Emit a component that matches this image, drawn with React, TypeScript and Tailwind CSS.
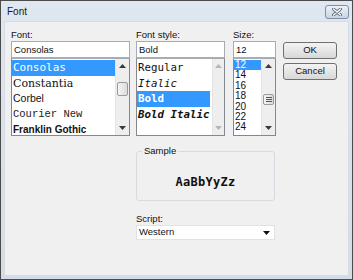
import React from 'react';

const ui = { fontFamily: '"Liberation Sans", Arial, sans-serif' };
const mono = { fontFamily: '"DejaVu Sans Mono", "Liberation Mono", monospace' };

const Up = () => (
  <svg width="7" height="4" viewBox="0 0 7 4">
    <path d="M0 4 L3.5 0 L7 4 Z" fill="#3a3a3a" />
  </svg>
);

const Down = () => (
  <svg width="7" height="4" viewBox="0 0 7 4">
    <path d="M0 0 L3.5 4 L7 0 Z" fill="#3a3a3a" />
  </svg>
);

const ScrollBar: React.FC<{ thumbTop?: number; thumbH?: number; grip?: boolean; disabled?: boolean }> = ({
  thumbTop,
  thumbH,
  grip,
  disabled,
}) => (
  <div className="w-[14px] h-full bg-[#eeeeee] border-l border-[#e4e4e4] flex flex-col items-center justify-between py-[5px] relative">
    <div className={disabled ? 'opacity-30' : ''}>
      <Up />
    </div>
    {thumbTop !== undefined && (
      <div
        className="absolute left-[1px] right-[1px] rounded-[2px] border border-[#9a9a9a] bg-gradient-to-r from-[#f4f4f4] to-[#dcdcdc] flex flex-col items-center justify-center gap-[1px]"
        style={{ top: thumbTop, height: thumbH }}
      >
        {grip && (
          <>
            <div className="w-[6px] h-px bg-[#555]" />
            <div className="w-[6px] h-px bg-[#555]" />
            <div className="w-[6px] h-px bg-[#555]" />
          </>
        )}
      </div>
    )}
    <div className={disabled ? 'opacity-30' : ''}>
      <Down />
    </div>
  </div>
);

const Label: React.FC<{ children: React.ReactNode }> = ({ children }) => (
  <div className="h-[13px] text-[9.5px] leading-[13px] text-[#111]" style={ui}>
    {children}
  </div>
);

const Input: React.FC<{ value: string }> = ({ value }) => (
  <div
    className="h-[17px] bg-white border border-[#a9acb3] px-[2px] text-[9.5px] leading-[15px] text-[#111]"
    style={ui}
  >
    {value}
  </div>
);

const Button: React.FC<{ children: React.ReactNode }> = ({ children }) => (
  <div
    className="h-[17px] rounded-[3px] border border-[#707070] bg-gradient-to-b from-[#f3f3f3] via-[#e6e6e6] to-[#d8d8d8] flex items-center justify-center text-[9.5px] text-[#111]"
    style={ui}
  >
    {children}
  </div>
);

export default function App() {
  const fonts = [
    { name: 'Consolas', cls: 'text-[11px] text-white', style: mono, sel: true },
    { name: 'Constantia', cls: 'text-[11px] text-[#111]', style: { fontFamily: '"DejaVu Serif", serif' } },
    { name: 'Corbel', cls: 'text-[10.5px] text-[#111]', style: ui },
    { name: 'Courier New', cls: 'text-[10.5px] text-[#222]', style: { fontFamily: '"Liberation Mono", monospace' } },
    { name: 'Franklin Gothic', cls: 'text-[10px] font-bold text-[#111]', style: ui },
  ];
  const styles = [
    { name: 'Regular', cls: '' },
    { name: 'Italic', cls: 'italic' },
    { name: 'Bold', cls: 'font-bold text-white', sel: true },
    { name: 'Bold Italic', cls: 'font-bold italic' },
  ];
  const sizes = ['12', '14', '16', '18', '20', '22', '24'];

  return (
    <div className="w-[353px] h-[280px] border border-[#4b4b4b] bg-gradient-to-b from-[#dfe7f0] to-[#d3dde8] flex flex-col overflow-hidden">
      <div className="h-[20px] flex items-center justify-between pl-[6px] pr-[3px]">
        <span className="text-[10px] text-[#1a1a1a]" style={ui}>
          Font
        </span>
        <div className="w-[24px] h-[14px] mt-[1px] rounded-[3px] border border-[#7d8ea5] bg-gradient-to-b from-[#eef2f7] to-[#c9d4e1] flex items-center justify-center">
          <svg width="10" height="8" viewBox="0 0 10 8">
            <path d="M1.5 1 L8.5 7 M8.5 1 L1.5 7" stroke="#5d6b7d" strokeWidth="3" strokeLinecap="round" />
            <path d="M1.5 1 L8.5 7 M8.5 1 L1.5 7" stroke="#ffffff" strokeWidth="1.4" strokeLinecap="round" />
          </svg>
        </div>
      </div>
      <div className="flex-1 mx-[3px] mb-[3px] bg-[#f0f0f0] border border-[#d6dce3] pl-[6px] pt-[6px]">
        <div className="flex">
          <div className="w-[119px]">
            <Label>Font:</Label>
            <Input value="Consolas" />
            <div className="h-[78px] bg-white border border-[#828790] border-t-[#a9acb3] flex">
              <div className="flex-1 pt-px">
                {fonts.map((f) => (
                  <div
                    key={f.name}
                    className={`h-[15.5px] leading-[15.5px] pl-[1px] whitespace-nowrap ${f.cls} ${f.sel ? 'bg-[#3399ff]' : ''}`}
                    style={f.style}
                  >
                    {f.name}
                  </div>
                ))}
              </div>
              <ScrollBar thumbTop={23} thumbH={14} />
            </div>
          </div>

          <div className="w-[89px] ml-[6px]">
            <Label>Font style:</Label>
            <Input value="Bold" />
            <div className="h-[78px] bg-white border border-[#828790] border-t-[#a9acb3] flex">
              <div className="flex-1 pt-px pr-[2px]">
                {styles.map((s) => (
                  <div
                    key={s.name}
                    className={`h-[15.5px] leading-[15.5px] pl-[1px] text-[10.8px] whitespace-nowrap text-[#111] ${s.cls} ${s.sel ? 'bg-[#3399ff]' : ''}`}
                    style={mono}
                  >
                    {s.name}
                  </div>
                ))}
              </div>
              <ScrollBar disabled />
            </div>
          </div>

          <div className="w-[43px] ml-[8px]">
            <Label>Size:</Label>
            <Input value="12" />
            <div className="h-[78px] bg-white border border-[#828790] border-t-[#a9acb3] flex overflow-hidden">
              <div className="flex-1 pt-px">
                {sizes.map((s, i) => (
                  <div
                    key={s}
                    className={`h-[10.4px] leading-[10.4px] pl-[1px] text-[10px] ${i === 0 ? 'bg-[#3399ff] text-white' : 'text-[#111]'}`}
                    style={ui}
                  >
                    {s}
                  </div>
                ))}
              </div>
              <ScrollBar thumbTop={35} thumbH={11} grip />
            </div>
          </div>

          <div className="w-[54px] ml-[7px] pt-[14px] flex flex-col gap-[4px]">
            <Button>OK</Button>
            <Button>Cancel</Button>
          </div>
        </div>

        <div className="ml-[125px] w-[139px] mt-[15px]">
          <div className="relative h-[50px] border border-[#d5dbe1] rounded-[3px] mt-[3px] flex items-center justify-center">
            <span
              className="absolute -top-[7px] left-[5px] px-[2px] bg-[#f0f0f0] text-[9.5px] leading-[12px] text-[#111]"
              style={ui}
            >
              Sample
            </span>
            <span className="text-[12px] font-bold text-[#111] mt-[12px] tracking-[0.3px]" style={mono}>
              AaBbYyZz
            </span>
          </div>
          <div className="mt-[11px]">
            <Label>Script:</Label>
            <div className="h-[15px] bg-white border border-[#e2e2e2] flex items-center justify-between pl-[2px] pr-[4px]">
              <span className="text-[9.5px] text-[#111]" style={ui}>
                Western
              </span>
              <svg width="7" height="4" viewBox="0 0 7 4">
                <path d="M0 0 L3.5 4 L7 0 Z" fill="#111" />
              </svg>
            </div>
          </div>
        </div>
      </div>
    </div>
  );
}
